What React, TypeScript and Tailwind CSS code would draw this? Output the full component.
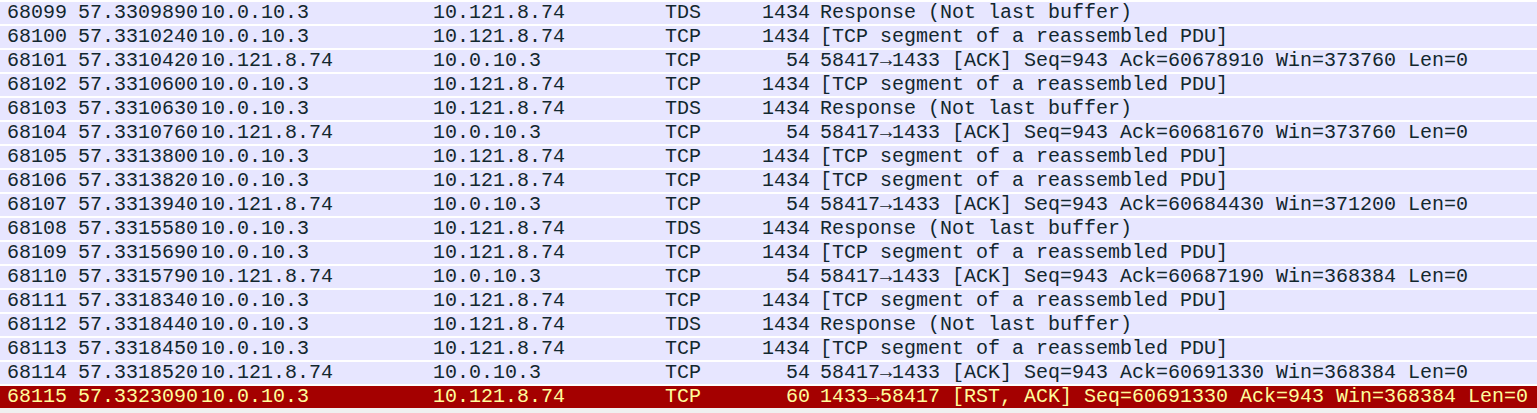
type Packet = {
  no: string;
  time: string;
  src: string;
  dst: string;
  proto: string;
  len: string;
  info: string;
  rst?: boolean;
};

const SERVER = '10.0.10.3';
const CLIENT = '10.121.8.74';
const SEG = '[TCP segment of a reassembled PDU]';
const RESP = 'Response (Not last buffer)';

const packets: Packet[] = [
  { no: '68099', time: '57.3309890', src: SERVER, dst: CLIENT, proto: 'TDS', len: '1434', info: RESP },
  { no: '68100', time: '57.3310240', src: SERVER, dst: CLIENT, proto: 'TCP', len: '1434', info: SEG },
  { no: '68101', time: '57.3310420', src: CLIENT, dst: SERVER, proto: 'TCP', len: '54', info: '58417→1433 [ACK] Seq=943 Ack=60678910 Win=373760 Len=0' },
  { no: '68102', time: '57.3310600', src: SERVER, dst: CLIENT, proto: 'TCP', len: '1434', info: SEG },
  { no: '68103', time: '57.3310630', src: SERVER, dst: CLIENT, proto: 'TDS', len: '1434', info: RESP },
  { no: '68104', time: '57.3310760', src: CLIENT, dst: SERVER, proto: 'TCP', len: '54', info: '58417→1433 [ACK] Seq=943 Ack=60681670 Win=373760 Len=0' },
  { no: '68105', time: '57.3313800', src: SERVER, dst: CLIENT, proto: 'TCP', len: '1434', info: SEG },
  { no: '68106', time: '57.3313820', src: SERVER, dst: CLIENT, proto: 'TCP', len: '1434', info: SEG },
  { no: '68107', time: '57.3313940', src: CLIENT, dst: SERVER, proto: 'TCP', len: '54', info: '58417→1433 [ACK] Seq=943 Ack=60684430 Win=371200 Len=0' },
  { no: '68108', time: '57.3315580', src: SERVER, dst: CLIENT, proto: 'TDS', len: '1434', info: RESP },
  { no: '68109', time: '57.3315690', src: SERVER, dst: CLIENT, proto: 'TCP', len: '1434', info: SEG },
  { no: '68110', time: '57.3315790', src: CLIENT, dst: SERVER, proto: 'TCP', len: '54', info: '58417→1433 [ACK] Seq=943 Ack=60687190 Win=368384 Len=0' },
  { no: '68111', time: '57.3318340', src: SERVER, dst: CLIENT, proto: 'TCP', len: '1434', info: SEG },
  { no: '68112', time: '57.3318440', src: SERVER, dst: CLIENT, proto: 'TDS', len: '1434', info: RESP },
  { no: '68113', time: '57.3318450', src: SERVER, dst: CLIENT, proto: 'TCP', len: '1434', info: SEG },
  { no: '68114', time: '57.3318520', src: CLIENT, dst: SERVER, proto: 'TCP', len: '54', info: '58417→1433 [ACK] Seq=943 Ack=60691330 Win=368384 Len=0' },
  { no: '68115', time: '57.3323090', src: SERVER, dst: CLIENT, proto: 'TCP', len: '60', info: '1433→58417 [RST, ACK] Seq=60691330 Ack=943 Win=368384 Len=0', rst: true },
];

function Row({ p }: { p: Packet }) {
  const tone = p.rst ? 'bg-[#a40000] text-[#fffc9c]' : 'bg-[#e7e6ff] text-[#12272e]';
  return (
    <div className="border-t-2 border-white">
      <div className={`grid grid-cols-[71px_123px_232px_232px_102px_50px_1fr] h-[22px] items-center leading-[22px] whitespace-nowrap ${tone}`}>
        <span className="pl-[7px]">{p.no}</span>
        <span className="pl-[7px]">{p.time}</span>
        <span className="pl-[7px]">{p.src}</span>
        <span className="pl-[7px]">{p.dst}</span>
        <span className="pl-[7px]">{p.proto}</span>
        <span className="text-right">{p.len}</span>
        <span className="pl-[10px]">{p.info}</span>
      </div>
    </div>
  );
}

export default function App() {
  return (
    <div className="w-[1537px] h-[413px] bg-[#f0f0f0] overflow-hidden font-['Liberation_Mono',monospace] text-[20px]">
      {packets.map((p) => (
        <Row key={p.no} p={p} />
      ))}
    </div>
  );
}
